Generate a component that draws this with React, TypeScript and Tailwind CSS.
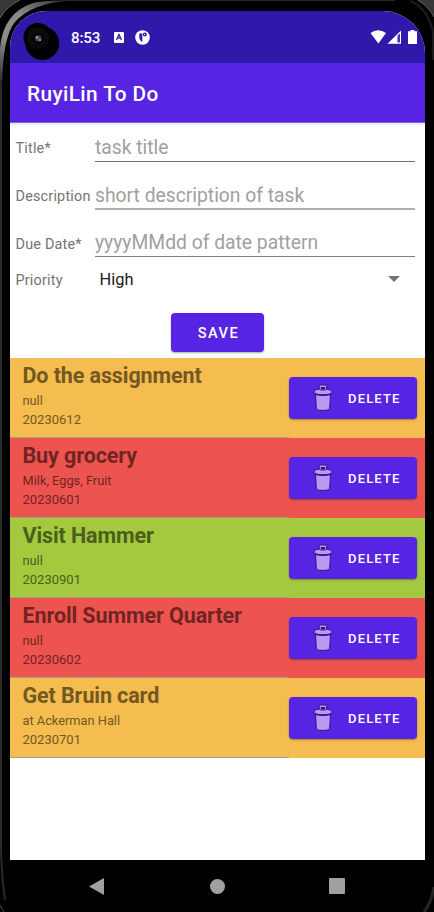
import React from "react";

type Field = { label: string; hint: string; height: string; labelPad: string; line: string };
type Task = { title: string; note: string; date: string; tone: string };

const fields: Field[] = [
  { label: "Title*", hint: "task title", height: "h-[39px]", labelPad: "pb-[3px]", line: "border-b border-[#747474] leading-[24px]" },
  { label: "Description", hint: "short description of task", height: "h-[48px]", labelPad: "pb-[3px]", line: "border-b-2 border-[#b0b0b0] leading-[23px]" },
  { label: "Due Date*", hint: "yyyyMMdd of date pattern", height: "h-[47px]", labelPad: "pb-[2px]", line: "border-b border-[#808080] leading-[24px]" },
];

const tasks: Task[] = [
  { title: "Do the assignment", note: "null", date: "20230612", tone: "bg-[#f5bc50] text-[#735822]" },
  { title: "Buy grocery", note: "Milk, Eggs, Fruit", date: "20230601", tone: "bg-[#ee544f] text-[#702523]" },
  { title: "Visit Hammer", note: "null", date: "20230901", tone: "bg-[#a4c93f] text-[#4c5e1b]" },
  { title: "Enroll Summer Quarter", note: "null", date: "20230602", tone: "bg-[#ee544f] text-[#702523]" },
  { title: "Get Bruin card", note: "at Ackerman Hall", date: "20230701", tone: "bg-[#f5bc50] text-[#735822]" },
];

function Bezel() {
  return (
    <svg className="pointer-events-none absolute inset-0" width="434" height="912" viewBox="0 0 434 912" fill="none">
      <defs>
        <linearGradient id="rim" x1="0" y1="80" x2="65" y2="0" gradientUnits="userSpaceOnUse">
          <stop stopColor="#333" />
          <stop offset=".35" stopColor="#8c8c8c" />
          <stop offset=".6" stopColor="#8c8c8c" />
          <stop offset="1" stopColor="#333" />
        </linearGradient>
      </defs>
      <path d="M0 0H20Q7 6 0 18Z" fill="#35383a" />
      <path d="M0 18Q7 6 20 0" stroke="#606060" strokeWidth="1" />
      <path d="M0 85V48Q3 13 33 3Q43 0 70 .5Q32 3 15 22Q3 36 2 85Z" fill="url(#rim)" />
      <path d="M60 .5H395" stroke="#282828" />
      <path d="M418 0H434V16Q428 6 418 0Z" fill="#353738" />
      <path d="M418 0Q429 7 434 17" stroke="#666" strokeWidth="1" />
      <path d="M410 1Q428 8 433 32V60" stroke="#1c1c1c" strokeWidth="2" />
      <path d="M1 80V850Q2 880 5 900" stroke="#292929" strokeWidth="2" />
      <path d="M0 905L4 912" stroke="#4a4a4a" />
      <path d="M434 887Q432 901 424 912" stroke="#242424" strokeWidth="3" />
    </svg>
  );
}

function Camera() {
  return (
    <svg className="absolute left-[12px] top-[11px]" width="38" height="39" viewBox="22 22 38 39">
      <circle cx="37.8" cy="37.3" r="14.3" fill="#000" />
      <circle cx="42.3" cy="43.2" r="16.8" fill="#000" />
      <circle cx="38" cy="38" r="11" fill="#0b0b0b" />
      <circle cx="38" cy="38" r="5.5" fill="#050505" />
      <circle cx="38.4" cy="38.4" r="3.2" fill="#35445f" />
      <circle cx="37" cy="37.5" r="1.4" fill="#8798ad" />
      <circle cx="40" cy="40" r="1" fill="#a7afbd" />
    </svg>
  );
}

function StatusBar() {
  return (
    <div className="relative flex h-[52px] shrink-0 items-center bg-[#2f18aa] pl-[61px] text-white">
      <Camera />
      <span className="w-[43px] pt-px text-[15.2px] leading-5 font-medium tracking-[-0.2px]">8:53</span>
      <svg width="10" height="11" viewBox="0 0 10 11">
        <rect width="10" height="11" rx="1" fill="#fff" />
        <path d="M2.5 8L5 2.5L7.5 8M3.5 6.2H6.5" fill="none" stroke="#2f18aa" strokeWidth="1.3" />
      </svg>
      <svg className="ml-[11px]" width="15" height="15" viewBox="0 0 15 15">
        <circle cx="7.5" cy="7.5" r="7.3" fill="#fff" />
        <path d="M4.3 3.4H7.3V12.2Q4.3 10.5 4.3 7.5Z" fill="#2f18aa" />
        <circle cx="9.8" cy="4.6" r="2" fill="#2f18aa" />
        <circle cx="9.6" cy="4.6" r=".7" fill="#fff" />
      </svg>
      <svg className="ml-auto mr-[7px]" width="48" height="15" viewBox="370 30 48 15" fill="#fff">
        <path d="M370.5 33Q378 27.5 386 33L378.4 43.5Z" />
        <path d="M387.5 43.8L401 30.5V43.8Z" />
        <path d="M397.4 35.7L400 33.2V42.5H397.4Z" fill="#4935b5" />
        <path d="M410.5 30H414.5V31.3H417V44H408V31.3H410.5Z" />
      </svg>
    </div>
  );
}

function TrashIcon() {
  return (
    <svg width="20" height="28" viewBox="0 0 20 28" stroke="#35108f" strokeWidth="1" strokeLinejoin="round">
      <path d="M2.5 10L3.3 24.5Q4 26.5 10 26.5Q16 26.5 16.7 24.5L17.5 10Z" fill="#b99af2" />
      <path d="M6.2 6V1.8Q6.2 1 7 1H12.8Q13.6 1 13.6 1.8V6" fill="#b99af2" />
      <path d="M1 9V7.6Q2 5.6 6.2 5L7.5 5.9H12.3L13.6 5Q18 5.6 19 7.6V9Q17 10.8 10 10.9Q3 10.8 1 9Z" fill="#b99af2" />
      <rect x="7.8" y="3" width="4.4" height="2.2" fill="#35108f" stroke="none" />
      <path d="M2.3 10.3Q10 12.2 17.7 10.3" fill="none" strokeWidth="1.5" />
    </svg>
  );
}

function TaskRow({ task }: { task: Task }) {
  return (
    <div className={`relative flex h-20 shrink-0 ${task.tone}`}>
      <div className="w-[279px] border-b border-[#a99d88] pl-[12.5px] pt-[4px]">
        <h2 className="text-[21.5px] leading-[28px] font-bold tracking-[-0.1px] whitespace-nowrap">{task.title}</h2>
        <p className="mt-px text-[12.8px] leading-5">{task.note}</p>
        <p className="text-[13px] leading-[18px]">{task.date}</p>
      </div>
      <button className="mt-[19px] flex h-[42px] w-32 items-center rounded-[4px] bg-[#5724e3] pl-[24px] text-white shadow-[0_1px_2px_#0005]">
        <TrashIcon />
        <span className="ml-[15px] pt-px text-[13px] font-medium tracking-[1.15px]">DELETE</span>
      </button>
    </div>
  );
}

export default function App() {
  return (
    <div className="relative h-[912px] w-[434px] overflow-hidden bg-black pl-[10px] pt-[11px] font-[Roboto,sans-serif]">
      <Bezel />
      <main className="relative flex h-[849px] w-[415px] flex-col overflow-hidden rounded-tl-[36px] rounded-tr-[42px] bg-white">
        <StatusBar />
        <header className="flex h-[60px] shrink-0 items-center border-b border-[#855bea] bg-[#5724e3] pl-[17px] pt-[4px] text-[20.8px] font-medium tracking-[0.4px] text-white shadow-[0_1px_4px_#0002]">
          RuyiLin To Do
        </header>
        <form className="h-[235px] shrink-0">
          {fields.map((field) => (
            <div key={field.label} className={`flex items-end pl-[5.5px] ${field.height}`}>
              <label className={`w-[79.5px] whitespace-nowrap text-[14.4px] leading-5 tracking-[0.2px] text-[#747474] ${field.labelPad}`}>{field.label}</label>
              <div className={`w-80 pb-px text-[19.3px] text-[#a0a0a0] ${field.line}`}>{field.hint}</div>
            </div>
          ))}
          <div className="flex h-[44px] items-center pl-[5.5px]">
            <span className="w-[84px] pt-[3px] text-[14.4px] tracking-[0.2px] text-[#747474]">Priority</span>
            <span className="pt-[2px] text-[16.4px] text-[#202020]">High</span>
            <svg className="ml-auto mr-[25px]" width="12" height="6"><path d="M0 0H12L6 6Z" fill="#747474" /></svg>
          </div>
          <button type="button" className="ml-[161px] mt-[12px] flex h-[39px] w-[93px] items-center justify-center rounded-[4px] bg-[#5724e3] pl-[2px] pt-[2px] text-[14.6px] font-medium tracking-[1.5px] text-white shadow-[0_1px_2px_#0005]">SAVE</button>
        </form>
        <section>{tasks.map((task) => <TaskRow key={task.title} task={task} />)}</section>
      </main>
      <nav className="relative flex h-[52px] items-center pl-[79px]">
        <svg width="15" height="17" viewBox="0 0 15 17"><path d="M15 0V17L0 8.5Z" fill="#a0a0a0" /></svg>
        <span className="ml-[106px] size-[15px] rounded-full bg-[#a0a0a0]" />
        <span className="ml-[104px] size-4 rounded-[1px] bg-[#a0a0a0]" />
      </nav>
    </div>
  );
}
